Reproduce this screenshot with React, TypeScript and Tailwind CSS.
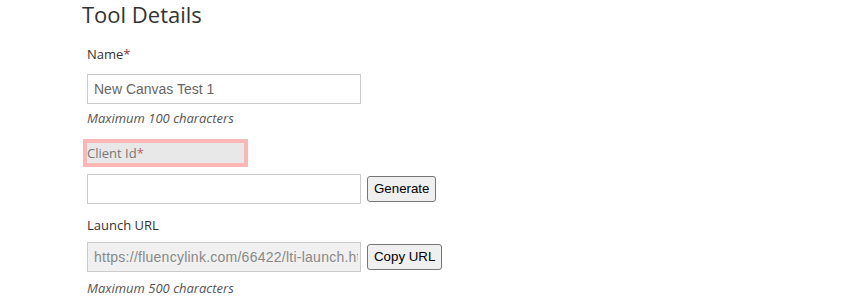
import React from "react";

export default function App() {
  const label = "text-[13px] leading-[20px] text-[#333]";
  const hint = "italic text-[13px] leading-[20px] text-[#555]";
  const input =
    "w-[274px] h-[30px] border border-[#ccc] pl-[6px] pr-[2px] text-[14px] text-[#666] outline-none";
  const btn =
    "h-[26px] px-[6px] border border-[#767676] rounded-[3px] bg-[#efefef] text-[13.3px] text-black";
  const arial = { fontFamily: '"Liberation Sans", Arial, sans-serif' };
  return (
    <div
      className="w-[863px] h-[305px] bg-white pl-[82px] overflow-hidden"
      style={{ fontFamily: '"Open Sans", sans-serif' }}
    >
      <h2 className="text-[22px] leading-[28px] text-[#333] pt-0">Tool Details</h2>
      <div className="pl-[5px] flex flex-col">
        <div className={`${label} mt-[16px]`}>
          Name<span className="text-[#a03030]">*</span>
        </div>
        <input className={`${input} mt-[10px]`} style={arial} defaultValue="New Canvas Test 1" />
        <div className={`${hint} mt-[4px]`}>Maximum 100 characters</div>
        <div className="mt-[11px] -ml-[4px] w-[165px] h-[28px] border-[4px] border-[#fbb6b6] bg-[#e8e8e8] flex items-center">
          <span className="text-[13px] leading-[20px] text-[#777]">
            Client Id<span className="text-[#c05a6a]">*</span>
          </span>
        </div>
        <div className="flex items-center gap-[6px] mt-[7px]">
          <input className={input} style={arial} />
          <button className={btn} style={arial}>
            Generate
          </button>
        </div>
        <div className={`${label} mt-[11px]`}>Launch URL</div>
        <div className="flex items-center gap-[6px] mt-[7px]">
          <input
            className={`${input} bg-[#f0f0f0] text-[#888] tracking-[0.25px]`}
            style={arial}
            defaultValue="https://fluencylink.com/66422/lti-launch.html"
            readOnly
          />
          <button className={btn} style={arial}>
            Copy URL
          </button>
        </div>
        <div className={`${hint} mt-[6px]`}>Maximum 500 characters</div>
      </div>
    </div>
  );
}
